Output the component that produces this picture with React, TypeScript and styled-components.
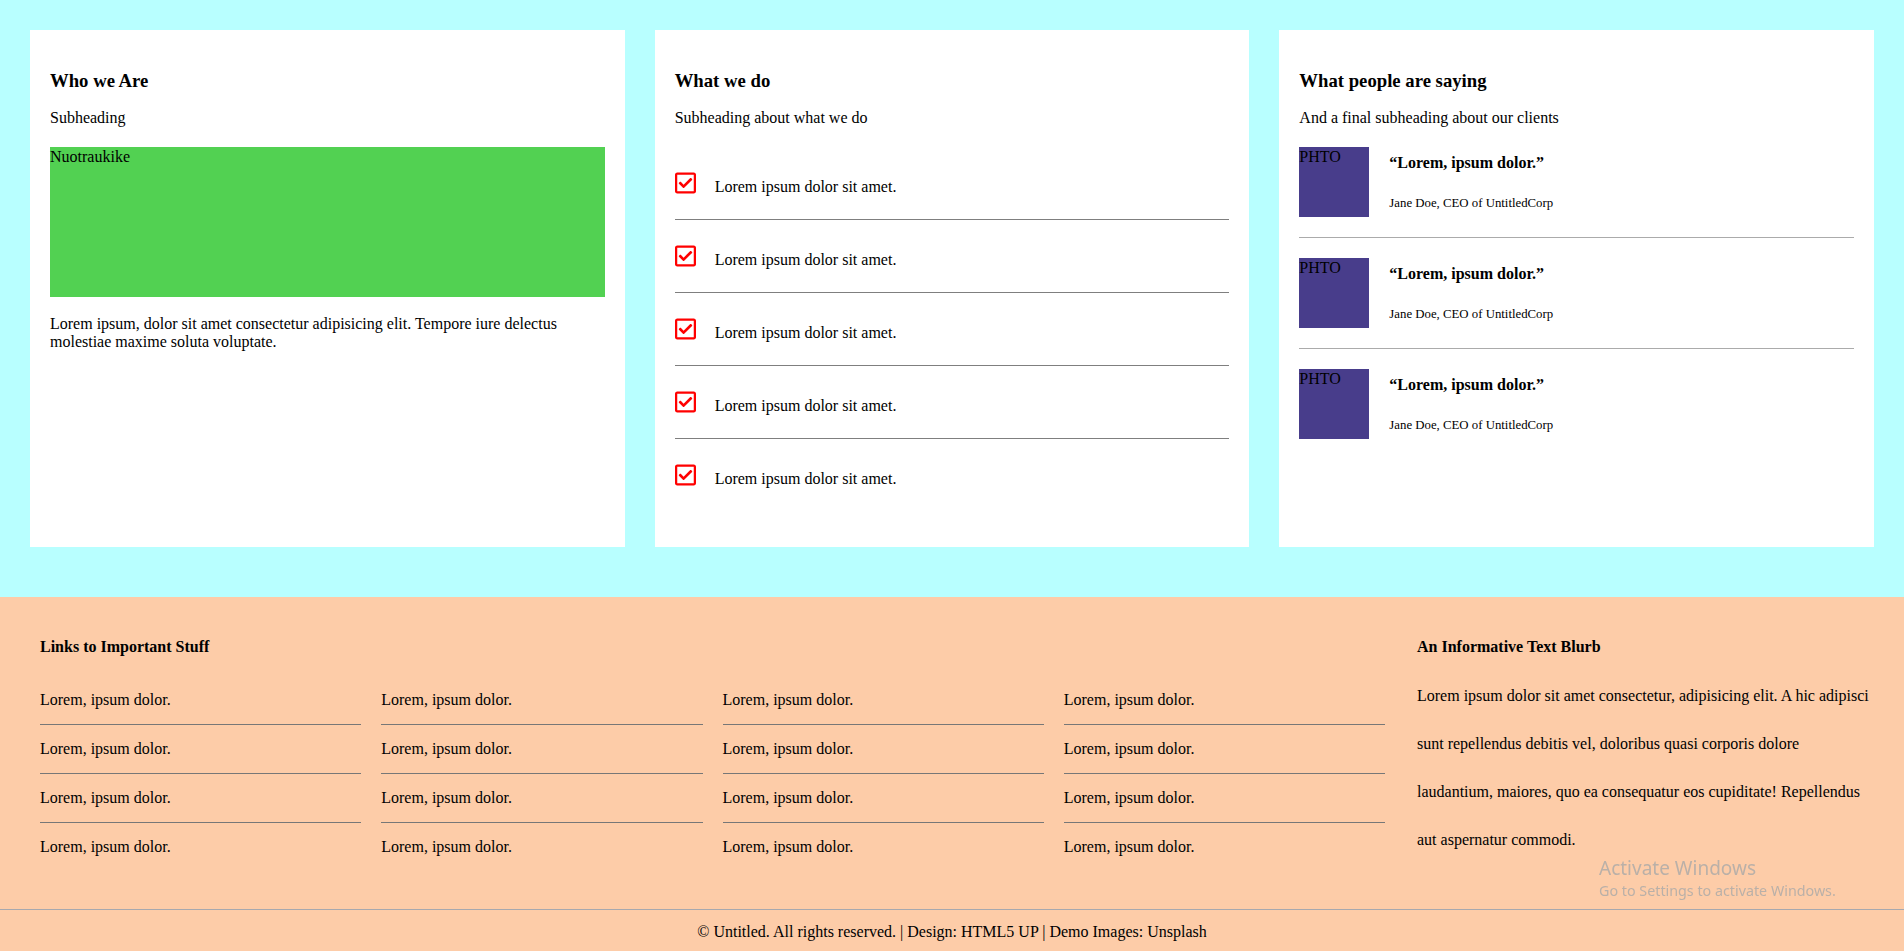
import React from "react";
import styled, { createGlobalStyle } from "styled-components";
import { FaRegCheckSquare } from "react-icons/fa";

const GlobalStyle = createGlobalStyle`
  *, *::before, *::after { box-sizing: border-box; }
  html, body {
    margin: 0;
    padding: 0;
    background: #fdcca8;
  }
  body {
    font-family: "Liberation Serif", "Times New Roman", serif;
    font-size: 16px;
    color: #000;
  }
`;

const Page = styled.div`
  display: flex;
  flex-direction: column;
`;

const Features = styled.section`
  background: #b8ffff;
  padding: 30px 30px 50px;
  display: grid;
  grid-template-columns: repeat(3, minmax(0, 1fr));
  gap: 30px;
  align-items: stretch;
`;

const Card = styled.article`
  background: #ffffff;
  padding: 20px;
`;

const CardTitle = styled.h3`
  font-size: 18.72px;
  font-weight: bold;
  margin: 19.5px 0 17.94px;
`;

const Subheading = styled.p`
  margin: 0 0 20px;
`;

const PhotoBlock = styled.div<{ $bg: string; $w: string; $h: string }>`
  background: ${(p) => p.$bg};
  width: ${(p) => p.$w};
  height: ${(p) => p.$h};
  flex-shrink: 0;
`;

const PhotoLabel = styled.span`
  display: block;
  padding-top: 1px;
`;

const BodyText = styled.p`
  margin: 18px 0 0;
`;

const CheckList = styled.ul`
  list-style: none;
  margin: 0 0 16px;
  padding: 0;
`;

const CheckItem = styled.li`
  padding: 23.5px 0;
  border-bottom: 1px solid #7f7f7f;
  &:last-child {
    border-bottom: none;
  }
`;

const CheckIcon = styled(FaRegCheckSquare)`
  width: 21px;
  height: 24px;
  color: #ff0000;
  vertical-align: -3px;
`;

const CheckText = styled.span`
  margin-left: 19px;
`;

const Testimonials = styled.ul`
  list-style: none;
  margin: 0;
  padding: 0;
`;

const Testimonial = styled.li`
  display: flex;
  align-items: flex-start;
  gap: 20px;
  padding: 20px 0;
  border-bottom: 1px solid #ababab;
  &:first-child {
    padding-top: 0;
  }
  &:last-child {
    border-bottom: none;
  }
`;

const QuoteCol = styled.div`
  padding-top: 6.5px;
`;

const Quote = styled.h4`
  font-size: 16px;
  font-weight: bold;
  margin: 0 0 24.5px;
`;

const Author = styled.p`
  font-size: 12.8px;
  margin: 0;
`;

const Footer = styled.footer`
  background: #fdcca8;
`;

const FooterMain = styled.div`
  display: grid;
  grid-template-columns: minmax(0, 1fr) 456px;
  column-gap: 32px;
  padding: 41px 31px 38.3px 40px;
`;

const FooterHeading = styled.h4`
  font-size: 16px;
  font-weight: bold;
  margin: 0 0 19.5px;
`;

const LinkGrid = styled.div`
  display: grid;
  grid-template-columns: repeat(4, minmax(0, 1fr));
  column-gap: 20px;
`;

const LinkList = styled.ul`
  list-style: none;
  margin: 0;
  padding: 0;
`;

const LinkItem = styled.li`
  padding: 15.5px 0 14.5px;
  border-bottom: 1px solid #777777;
  &:last-child {
    border-bottom: none;
  }
`;

const Blurb = styled.p`
  margin: -3.5px 0 0;
  line-height: 48px;
`;

const Copyright = styled.div`
  border-top: 1px solid #a7a8ae;
  padding: 13px 0 7px;
  text-align: center;
`;

const Watermark = styled.div`
  position: fixed;
  left: 1599px;
  top: 856px;
  font-family: "Noto Sans", "Open Sans", sans-serif;
  color: #bab0a8;
  pointer-events: none;
`;

const WatermarkTitle = styled.div`
  font-size: 19px;
  line-height: 25px;
`;

const WatermarkSub = styled.div`
  font-size: 14.3px;
  line-height: 20px;
`;

const checks = Array.from({ length: 5 }, () => "Lorem ipsum dolor sit amet.");
const quotes = Array.from({ length: 3 }, () => ({
  quote: "\u201cLorem, ipsum dolor.\u201d",
  author: "Jane Doe, CEO of UntitledCorp",
}));
const linkColumns = Array.from({ length: 4 }, () =>
  Array.from({ length: 4 }, () => "Lorem, ipsum dolor.")
);

export default function App() {
  return (
    <Page>
      <GlobalStyle />
      <Features>
        <Card>
          <CardTitle>Who we Are</CardTitle>
          <Subheading>Subheading</Subheading>
          <PhotoBlock $bg="#52d152" $w="100%" $h="150px">
            <PhotoLabel>Nuotraukike</PhotoLabel>
          </PhotoBlock>
          <BodyText>
            Lorem ipsum, dolor sit amet consectetur adipisicing elit. Tempore
            iure delectus molestiae maxime soluta voluptate.
          </BodyText>
        </Card>

        <Card>
          <CardTitle>What we do</CardTitle>
          <Subheading>Subheading about what we do</Subheading>
          <CheckList>
            {checks.map((t, i) => (
              <CheckItem key={i}>
                <CheckIcon />
                <CheckText>{t}</CheckText>
              </CheckItem>
            ))}
          </CheckList>
        </Card>

        <Card>
          <CardTitle>What people are saying</CardTitle>
          <Subheading>And a final subheading about our clients</Subheading>
          <Testimonials>
            {quotes.map((q, i) => (
              <Testimonial key={i}>
                <PhotoBlock $bg="#483d8b" $w="70px" $h="70px">
                  <PhotoLabel>PHTO</PhotoLabel>
                </PhotoBlock>
                <QuoteCol>
                  <Quote>{q.quote}</Quote>
                  <Author>{q.author}</Author>
                </QuoteCol>
              </Testimonial>
            ))}
          </Testimonials>
        </Card>
      </Features>

      <Footer>
        <FooterMain>
          <div>
            <FooterHeading>Links to Important Stuff</FooterHeading>
            <LinkGrid>
              {linkColumns.map((col, ci) => (
                <LinkList key={ci}>
                  {col.map((l, li) => (
                    <LinkItem key={li}>{l}</LinkItem>
                  ))}
                </LinkList>
              ))}
            </LinkGrid>
          </div>
          <div>
            <FooterHeading>An Informative Text Blurb</FooterHeading>
            <Blurb>
              Lorem ipsum dolor sit amet consectetur, adipisicing elit. A hic
              adipisci sunt repellendus debitis vel, doloribus quasi corporis
              dolore laudantium, maiores, quo ea consequatur eos cupiditate!
              Repellendus aut aspernatur commodi.
            </Blurb>
          </div>
        </FooterMain>
        <Copyright>
          © Untitled. All rights reserved. | Design: HTML5 UP | Demo Images:
          Unsplash
        </Copyright>
      </Footer>

      <Watermark>
        <WatermarkTitle>Activate Windows</WatermarkTitle>
        <WatermarkSub>Go to Settings to activate Windows.</WatermarkSub>
      </Watermark>
    </Page>
  );
}
